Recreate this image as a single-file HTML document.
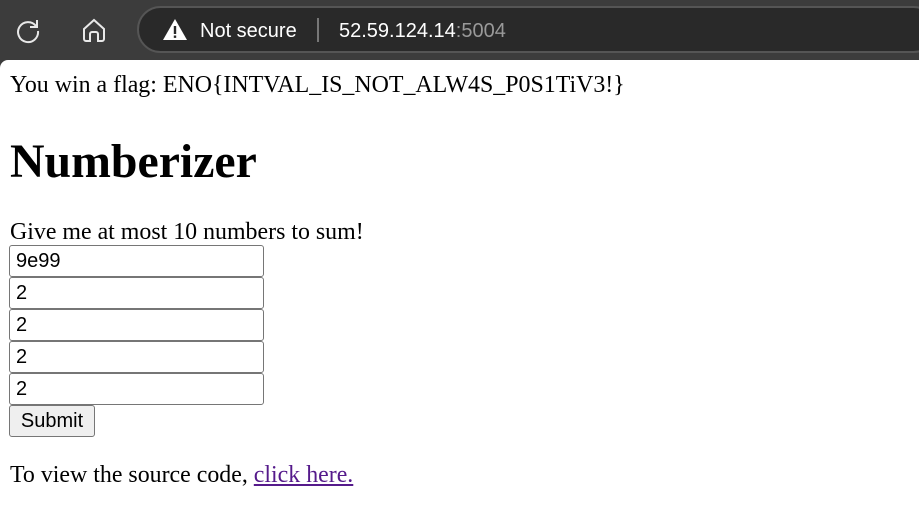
<!DOCTYPE html>
<html><head><style>
body{margin:0;width:919px;height:524px;overflow:hidden;background:#3c3c3c;font-family:"Liberation Serif",serif;position:relative}
.page{position:absolute;left:0;top:60px;width:919px;height:464px;background:#fff;border-top-left-radius:8px}
.t{position:absolute;left:10px;font-size:23.9px;line-height:28px;color:#000;white-space:nowrap}
h1{position:absolute;left:10px;top:134px;margin:0;font-size:47.8px;line-height:56px;font-weight:bold;white-space:nowrap}
.in{position:absolute;left:9px;width:255px;height:32px;box-sizing:border-box;border:1px solid #767676;border-radius:3px;font-family:"Liberation Sans",sans-serif;font-size:20px;line-height:30px;padding-left:6px;background:#fff}
.btn{position:absolute;left:9px;top:405px;width:86px;height:32px;box-sizing:border-box;border:1px solid #767676;border-radius:3px;background:#efefef;font-family:"Liberation Sans",sans-serif;font-size:20px;line-height:30px;text-align:center}
.pill{position:absolute;left:137px;top:6px;width:800px;height:47px;box-sizing:border-box;border:2px solid #555;border-radius:24px;background:#292929}
a{color:#551a8b;text-decoration:underline}
</style></head><body>
<svg style="position:absolute;left:14px;top:16px" width="28" height="28" viewBox="0 0 28 28" fill="none" stroke="#e8e8e8" stroke-width="2"><path d="M22 10A10 10 0 1 0 24 15"/><path d="M23 4v7h-7"/></svg>
<svg style="position:absolute;left:80px;top:16px" width="28" height="28" viewBox="0 0 28 28" fill="none" stroke="#e8e8e8" stroke-width="2"><path d="M4 13L14 4l10 9v10a2 2 0 0 1-2 2h-4v-7a2 2 0 0 0-2-2h-4a2 2 0 0 0-2 2v7H6a2 2 0 0 1-2-2z"/></svg>
<div class="pill"></div>
<svg style="position:absolute;left:162px;top:18px" width="26" height="24" viewBox="0 0 26 24"><path d="M13 1L25 22H1z" fill="#fff"/><rect x="11.8" y="8" width="2.4" height="8" fill="#292929"/><rect x="11.8" y="17.5" width="2.4" height="2.4" fill="#292929"/></svg>
<div style="position:absolute;left:200px;top:19px;font-family:'Liberation Sans',sans-serif;font-size:20px;color:#fff;line-height:24px">Not secure</div>
<div style="position:absolute;left:317px;top:18px;width:2px;height:24px;background:#777"></div>
<div style="position:absolute;left:339px;top:19px;font-family:'Liberation Sans',sans-serif;font-size:20px;color:#fff;line-height:24px">52.59.124.14<span style="color:#999">:5004</span></div>
<div class="page"></div>
<div class="t" style="top:71px">You win a flag: ENO{INTVAL_IS_NOT_ALW4S_P0S1TiV3!}</div>
<h1>Numberizer</h1>
<div class="t" style="top:218px">Give me at most 10 numbers to sum!</div>
<div class="in" style="top:245px">9e99</div>
<div class="in" style="top:277px">2</div>
<div class="in" style="top:309px">2</div>
<div class="in" style="top:341px">2</div>
<div class="in" style="top:373px">2</div>
<div class="btn">Submit</div>
<div class="t" style="top:461px">To view the source code, <a>click here.</a></div>
</body></html>
